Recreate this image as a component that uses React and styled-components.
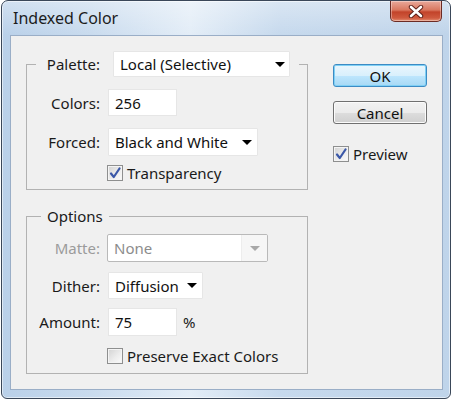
import React from "react";
import styled, { createGlobalStyle } from "styled-components";

const Global = createGlobalStyle`
  html, body { margin: 0; padding: 0; background: #ffffff; }
  body { font-family: "Noto Sans", "DejaVu Sans", sans-serif; }
  * { box-sizing: border-box; }
`;

const Window = styled.div`
  margin-left: 1px;
  width: 450px;
  height: 399px;
  border: 1px solid #3a4759;
  border-radius: 7px 7px 6px 6px;
  background:
    linear-gradient(180deg, rgba(255,255,255,0.35) 0px, rgba(255,255,255,0) 34px),
    linear-gradient(90deg, #b9d0e9 0%, #c9dbee 20%, #e3edf7 42%, #c6d9ed 62%, #bfd4ea 100%);
  box-shadow: inset 0 0 0 1px rgba(255,255,255,0.55);
  display: flex;
  flex-direction: column;
  padding: 0 7px 8px 8px;
`;

const TitleBar = styled.div`
  height: 34px;
  display: flex;
  align-items: flex-start;
  padding-left: 3px;
`;

const Title = styled.div`
  font-family: "Noto Sans", sans-serif;
  font-size: 16px;
  color: #1c1c1c;
  line-height: 20px;
  margin-top: 7px;
`;

const CloseButton = styled.div`
  margin-left: auto;
  margin-right: 1px;
  width: 52px;
  height: 21px;
  border: 1px solid #6b2b24;
  border-top: none;
  border-radius: 0 0 5px 5px;
  background: linear-gradient(180deg, #e9a99b 0%, #d9775f 45%, #c2432a 55%, #cf5a3f 85%, #e48f72 100%);
  box-shadow: inset 0 0 0 1px rgba(255,255,255,0.35);
  display: flex;
  align-items: center;
  justify-content: center;
`;

const Content = styled.div`
  flex: 1;
  border: 1px solid #9aaec7;
  background: #f0f0f0;
  display: flex;
  align-items: flex-start;
  padding: 15px 0 0 15px;
`;

const LeftColumn = styled.div`
  width: 282px;
  display: flex;
  flex-direction: column;
  gap: 16px;
`;

const Group = styled.fieldset`
  margin: 0;
  padding: 0 0 ${p => p.$pb}px 0;
  width: 282px;
  border: 1px solid #b2b2b2;
  border-radius: 0;
  min-inline-size: 0;
`;

const Legend = styled.legend`
  margin-left: ${p => p.$ml}px;
  padding: 0 ${p => p.$pl}px 0 ${p => p.$pl}px;
  padding-right: ${p => p.$pr}px;
  display: flex;
  align-items: center;
  font-size: 15px;
  line-height: 20px;
  color: #1a1a1a;
`;

const Row = styled.div`
  display: flex;
  align-items: center;
  margin-top: ${p => p.$mt}px;
`;

const Label = styled.span`
  width: ${p => p.$w || 73}px;
  text-align: right;
  margin-right: ${p => p.$gap || 8}px;
  font-size: 15px;
  line-height: 20px;
  color: ${p => (p.$disabled ? "#9b9b9b" : "#1a1a1a")};
  white-space: nowrap;
`;

const Select = styled.div`
  width: ${p => p.$w}px;
  height: ${p => p.$h}px;
  background: #ffffff;
  border: 1px solid ${p => (p.$disabled ? "#b9b9b9" : "#e6e6e6")};
  border-radius: ${p => (p.$disabled ? 2 : 1)}px;
  display: flex;
  align-items: center;
  padding-left: 6px;
  font-size: 15px;
  color: ${p => (p.$disabled ? "#8c8c8c" : "#111111")};
  white-space: nowrap;
  overflow: hidden;
`;

const SelectText = styled.span`
  flex: 1;
`;

const ArrowBox = styled.div`
  align-self: stretch;
  width: ${p => p.$w}px;
  display: flex;
  align-items: center;
  justify-content: center;
  background: ${p => (p.$disabled ? "#f6f6f6" : "transparent")};
  border-left: ${p => (p.$disabled ? "1px solid #ededed" : "none")};
`;

const Arrow = styled.span`
  width: 0;
  height: 0;
  border-left: 5px solid transparent;
  border-right: 5px solid transparent;
  border-top: 5px solid ${p => (p.$disabled ? "#a8a8a8" : "#000000")};
`;

const TextField = styled.div`
  width: ${p => p.$w}px;
  height: ${p => p.$h}px;
  background: #ffffff;
  border: 1px solid #e6e6e6;
  display: flex;
  align-items: center;
  padding-left: 6px;
  font-size: 15px;
  color: #111111;
`;

const Suffix = styled.span`
  margin-left: 6px;
  font-size: 15px;
  color: #1a1a1a;
`;

const CheckRow = styled.label`
  display: flex;
  align-items: center;
  gap: 4px;
  font-size: 15px;
  line-height: 20px;
  color: #1a1a1a;
  margin-top: ${p => p.$mt}px;
  padding-left: ${p => p.$indent || 0}px;
  height: 17px;
`;

const Box = styled.span`
  width: 16px;
  height: 16px;
  border: 1px solid #8e8f8f;
  background: linear-gradient(135deg, #d2d2d2 0%, #ececec 55%, #fbfbfb 100%);
  box-shadow: inset 0 0 0 1px #f4f4f4;
  display: flex;
  align-items: center;
  justify-content: center;
`;

const RightColumn = styled.div`
  margin-left: 25px;
  margin-top: 13px;
  display: flex;
  flex-direction: column;
`;

const Button = styled.div`
  width: 94px;
  height: 23px;
  margin-top: ${p => p.$mt || 0}px;
  border: 1px solid ${p => (p.$primary ? "#3c8bc4" : "#707070")};
  border-radius: 3px;
  background: ${p =>
    p.$primary
      ? "linear-gradient(180deg, #eaf6fd 0%, #d9f0fc 50%, #bee6fd 51%, #a7d9f5 100%)"
      : "linear-gradient(180deg, #f2f2f2 0%, #ebebeb 50%, #dddddd 51%, #cfcfcf 100%)"};
  box-shadow: inset 0 0 0 1px ${p => (p.$primary ? "#7fd0f5" : "#fbfbfb")};
  display: flex;
  align-items: center;
  justify-content: center;
  font-size: 15px;
  color: #111111;
`;

const Check = () => (
  <svg width="12" height="12" viewBox="0 0 12 12">
    <path d="M2 6.5 L4.8 10 L10.5 1.5" fill="none" stroke="#3b58a8" strokeWidth="2.2" strokeLinecap="round" strokeLinejoin="round" />
  </svg>
);

const CloseX = () => (
  <svg width="16" height="13" viewBox="0 0 16 13">
    <path d="M3 2 L13 11 M13 2 L3 11" stroke="#5a1d16" strokeWidth="4.4" strokeLinecap="round" />
    <path d="M3 2 L13 11 M13 2 L3 11" stroke="#ffffff" strokeWidth="2.6" strokeLinecap="round" />
  </svg>
);

const Checkbox = ({ checked, children, mt, indent }) => (
  <CheckRow $mt={mt} $indent={indent}>
    <Box>{checked && <Check />}</Box>
    {children}
  </CheckRow>
);

const Dropdown = ({ w, h, children, disabled, arrowW = 22 }) => (
  <Select $w={w} $h={h} $disabled={disabled}>
    <SelectText>{children}</SelectText>
    <ArrowBox $w={arrowW} $disabled={disabled}>
      <Arrow $disabled={disabled} />
    </ArrowBox>
  </Select>
);

export default function App() {
  return (
    <>
      <Global />
      <Window>
        <TitleBar>
          <Title>Indexed Color</Title>
          <CloseButton>
            <CloseX />
          </CloseButton>
        </TitleBar>
        <Content>
          <LeftColumn>
            <Group $pb={8}>
              <Legend $ml={9} $pl={0} $pr={9}>
                <Label $w={64} $gap={13}>Palette:</Label>
                <Dropdown w={177} h={26} arrowW={18}>Local (Selective)</Dropdown>
              </Legend>
              <Row $mt={12}>
                <Label>Colors:</Label>
                <TextField $w={69} $h={27}>256</TextField>
              </Row>
              <Row $mt={12}>
                <Label>Forced:</Label>
                <Dropdown w={150} h={28} arrowW={20}>Black and White</Dropdown>
              </Row>
              <Checkbox checked mt={8} indent={80}>Transparency</Checkbox>
            </Group>
            <Group $pb={9}>
              <Legend $ml={14} $pl={6} $pr={6}>Options</Legend>
              <Row $mt={8}>
                <Label $disabled $gap={7}>Matte:</Label>
                <Dropdown w={161} h={28} disabled arrowW={26}>None</Dropdown>
              </Row>
              <Row $mt={10}>
                <Label>Dither:</Label>
                <Dropdown w={95} h={27} arrowW={20}>Diffusion</Dropdown>
              </Row>
              <Row $mt={9}>
                <Label>Amount:</Label>
                <TextField $w={69} $h={28}>75</TextField>
                <Suffix>%</Suffix>
              </Row>
              <Checkbox mt={11} indent={80}>Preserve Exact Colors</Checkbox>
            </Group>
          </LeftColumn>
          <RightColumn>
            <Button $primary>OK</Button>
            <Button $mt={14}>Cancel</Button>
            <Checkbox checked mt={21}>Preview</Checkbox>
          </RightColumn>
        </Content>
      </Window>
    </>
  );
}
